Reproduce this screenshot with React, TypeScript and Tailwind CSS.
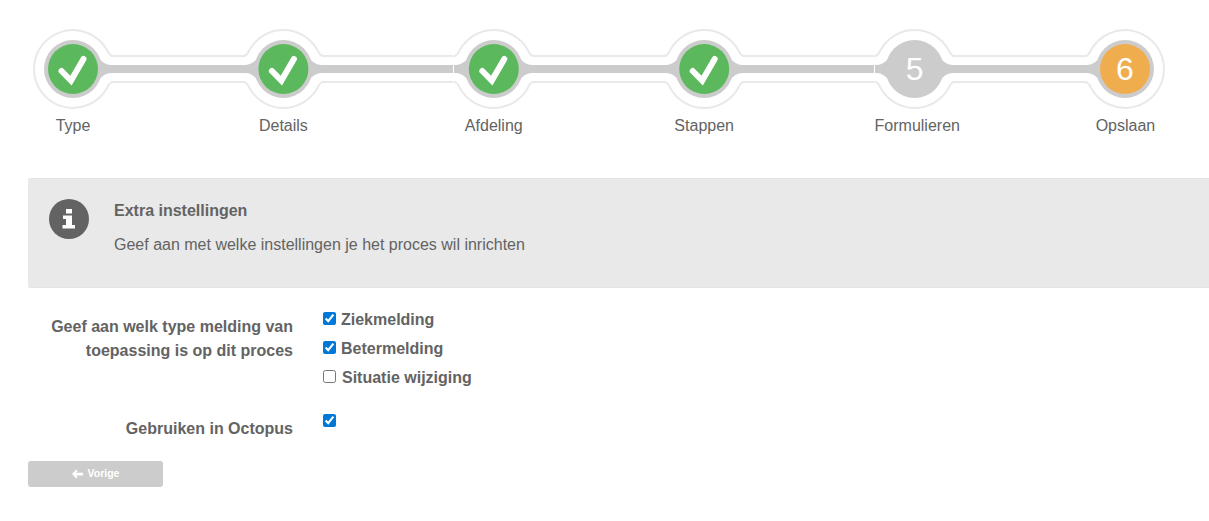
import React from 'react';

const steps = ['Type', 'Details', 'Afdeling', 'Stappen', 'Formulieren', 'Opslaan'];
// centers of the step circles, in page px
const centers = [73, 283.4, 493.8, 704.2, 914.6, 1125];
const CY = 69;

// outer ring with the small curve into the track lines
const ringPath = (cx: number, left: boolean, right: boolean) => {
    const r = 39;
    const top = CY - 13;
    const bottom = CY + 13;
    let d = '';
    if (right) {
        d += `M${cx + 40} ${top}Q${cx + 36.5} ${top} ${cx + 34} ${CY - 19}`;
    } else {
        d += `M${cx + r} ${CY}`;
    }
    if (left) {
        d += `A${r} ${r} 0 0 0 ${cx - 34} ${CY - 19}Q${cx - 36.5} ${top} ${cx - 40} ${top}`;
        d += `M${cx - 40} ${bottom}Q${cx - 36.5} ${bottom} ${cx - 34} ${CY + 19}`;
    } else {
        d += `A${r} ${r} 0 0 0 ${cx - r} ${CY}`;
    }
    if (right) {
        d += `A${r} ${r} 0 0 0 ${cx + 34} ${CY + 19}Q${cx + 36.5} ${bottom} ${cx + 40} ${bottom}`;
    } else {
        d += `A${r} ${r} 0 0 0 ${cx + r} ${CY}`;
    }
    return d;
};

// gray flare from the disc into the bar
const flarePath = (cx: number, dir: 1 | -1) =>
    `M${cx + dir * 25} ${CY - 12}Q${cx + dir * 31} ${CY - 4} ${cx + dir * 38} ${CY - 4}V${CY + 4}Q${cx + dir * 31} ${CY + 4} ${cx + dir * 25} ${CY + 12}Z`;

const WizardTrack: React.FC = () => (
    <svg width={1209} height={113} viewBox="0 0 1209 113" className="block">
        {centers.slice(0, -1).map((cx, i) => (
            <g key={cx}>
                <rect x={cx + 38} y={CY - 14} width={centers[i + 1] - cx - 76} height={2} fill="#e9e9e9" />
                <rect x={cx + 38} y={CY + 12} width={centers[i + 1] - cx - 76} height={2} fill="#e9e9e9" />
                <rect x={cx + 36} y={CY - 4} width={centers[i + 1] - cx - 72} height={8} fill="#cccccc" />
            </g>
        ))}
        {/* thin seams where two step blocks meet */}
        <rect x={453} y={54} width={1} height={30} fill="#ffffff" />
        <rect x={874} y={54} width={1} height={30} fill="#ffffff" />
        {centers.map((cx, i) => (
            <g key={cx}>
                <path
                    d={ringPath(cx, i > 0, i < centers.length - 1)}
                    fill="none"
                    stroke="#e9e9e9"
                    strokeWidth={2}
                />
                {i > 0 && <path d={flarePath(cx, -1)} fill="#cccccc" />}
                {i < centers.length - 1 && <path d={flarePath(cx, 1)} fill="#cccccc" />}
                <circle cx={cx} cy={CY} r={29} fill="#cccccc" />
                {i < 4 && (
                    <>
                        <circle cx={cx} cy={CY} r={25} fill="#5cb85c" />
                        <path
                            d={`M${cx - 11.5} ${CY + 2}L${cx - 2} ${CY + 11.5}L${cx + 10.5} ${CY - 10}`}
                            fill="none"
                            stroke="#ffffff"
                            strokeWidth={6}
                            strokeLinecap="round"
                            strokeLinejoin="miter"
                        />
                    </>
                )}
                {i === 5 && <circle cx={cx} cy={CY} r={25} fill="#f0ad4e" />}
                {i >= 4 && (
                    <text
                        x={cx}
                        y={CY + 11}
                        textAnchor="middle"
                        fill="#ffffff"
                        fontSize={32}
                        fontFamily='"Liberation Sans", Arial, sans-serif'
                    >
                        {i + 1}
                    </text>
                )}
            </g>
        ))}
    </svg>
);

// slab "i" in a filled circle
const InfoIcon: React.FC = () => (
    <svg width={40} height={40} viewBox="0 0 40 40" className="mt-[6px] shrink-0">
        <circle cx={20} cy={20} r={20} fill="#636363" />
        <path fill="#ffffff" d="M17 10h6v4.5h-6zM14 16.5h9V26h3v3.5H13.5V26H17v-6h-3z" />
    </svg>
);

const ArrowLeft: React.FC = () => (
    <svg width={11} height={10} viewBox="0 0 12 10" className="shrink-0">
        <path fill="#ffffff" d="M0 5 4.8 0.2 6.2 1.6 4.3 3.5H12v3H4.3l1.9 1.9-1.4 1.4z" />
    </svg>
);

const Option: React.FC<{ label: string; checked?: boolean; gap: string }> = ({ label, checked, gap }) => (
    <label className="flex h-[29px] items-center font-bold">
        <input
            type="checkbox"
            defaultChecked={checked}
            className={`m-0 h-[13px] w-[13px] -translate-y-px accent-[#0078d7] ${gap}`}
        />
        {label}
    </label>
);

const App: React.FC = () => {
    return (
        <div className="h-[521px] w-[1209px] overflow-hidden bg-white font-['Liberation_Sans',Arial,sans-serif] text-base text-[#636363]">
            <WizardTrack />
            <div className="ml-[28px] flex w-[1142px] justify-between">
                {steps.map((step) => (
                    <div
                        key={step}
                        className={`w-[90px] text-center leading-[26px] whitespace-nowrap ${step === 'Formulieren' ? 'pl-[5px]' : ''} ${step === 'Opslaan' ? 'pl-[1px]' : ''}`}
                    >
                        {step}
                    </div>
                ))}
            </div>

            <div className="mt-[39px] ml-[28px] flex h-[110px] rounded-l-[2px] border-y border-[#e3e3e3] bg-[#e9e9e9] pt-[14px] pl-[21px]">
                <InfoIcon />
                <div className="ml-[25px]">
                    <h4 className="text-base leading-[36px] font-bold">Extra instellingen</h4>
                    <p className="mt-[-2px] leading-[36px]">Geef aan met welke instellingen je het proces wil inrichten</p>
                </div>
            </div>

            <div className="mt-[17px] ml-[28px] flex">
                <div className="w-[265px] pt-[10px] text-right leading-[24px] font-bold">
                    Geef aan welk type melding van toepassing is op dit proces
                </div>
                <div className="ml-[30px]">
                    <Option label="Ziekmelding" checked gap="mr-[5px]" />
                    <Option label="Betermelding" checked gap="mr-[5px]" />
                    <Option label="Situatie wijziging" gap="mr-[6px]" />
                </div>
            </div>

            <div className="mt-[22px] ml-[28px] flex">
                <div className="w-[265px] pt-[3px] text-right leading-[24px] font-bold">Gebruiken in Octopus</div>
                <div className="ml-[30px]">
                    <input type="checkbox" defaultChecked className="m-0 block h-[13px] w-[13px] accent-[#0078d7]" />
                </div>
            </div>

            <button className="mt-[20px] ml-[28px] flex h-[26px] w-[135px] items-center justify-center gap-[5px] rounded-[3px] bg-[#cccccc] text-[10.5px] font-bold text-white">
                <ArrowLeft />
                Vorige
            </button>
        </div>
    );
};

export default App;
